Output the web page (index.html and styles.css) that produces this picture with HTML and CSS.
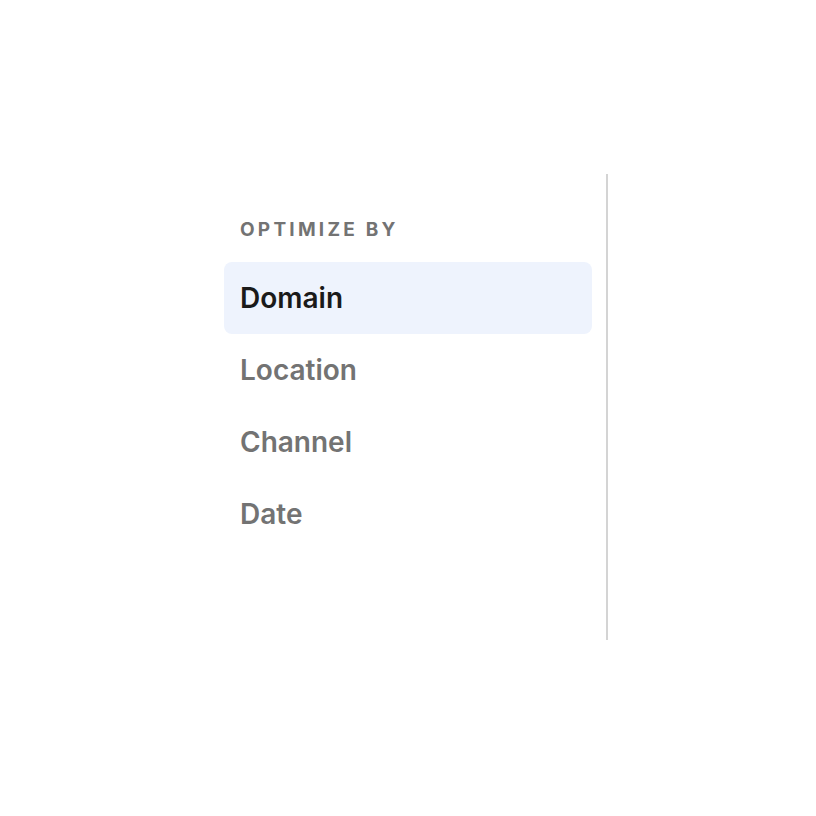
FILE: index.html
```html
<!DOCTYPE html>
<html>
<head>
<meta charset="utf-8">
<link rel="stylesheet" href="styles.css">
</head>
<body>
<div class="stage">
  <nav class="panel">
    <div class="label">OPTIMIZE BY</div>
    <ul class="list">
      <li class="item active">Domain</li>
      <li class="item">Location</li>
      <li class="item">Channel</li>
      <li class="item">Date</li>
    </ul>
  </nav>
</div>
</body>
</html>
```
FILE: styles.css
```css
html, body {
  margin: 0;
  padding: 0;
  background: #ffffff;
}
body {
  font-family: Inter, "Noto Sans", sans-serif;
}
.stage {
  box-sizing: border-box;
  width: 816px;
  height: 816px;
  padding-top: 174px;
  display: flex;
  justify-content: center;
  align-items: flex-start;
}
.panel {
  box-sizing: border-box;
  width: 400px;
  height: 466px;
  border-right: 2px solid #d4d4d4;
  padding: 44px 14px 0 16px;
}
.label {
  font-size: 19px;
  line-height: 24px;
  font-weight: 700;
  letter-spacing: 0.17em;
  color: #737373;
  padding-left: 16px;
  margin-bottom: 20px;
}
.list {
  list-style: none;
  margin: 0;
  padding: 0;
}
.item {
  height: 72px;
  display: flex;
  align-items: center;
  padding: 0 16px;
  font-size: 28px;
  font-weight: 600;
  color: #737373;
  border-radius: 8px;
}
.item.active {
  background: #eef3fd;
  color: #1a1a1a;
}
```
